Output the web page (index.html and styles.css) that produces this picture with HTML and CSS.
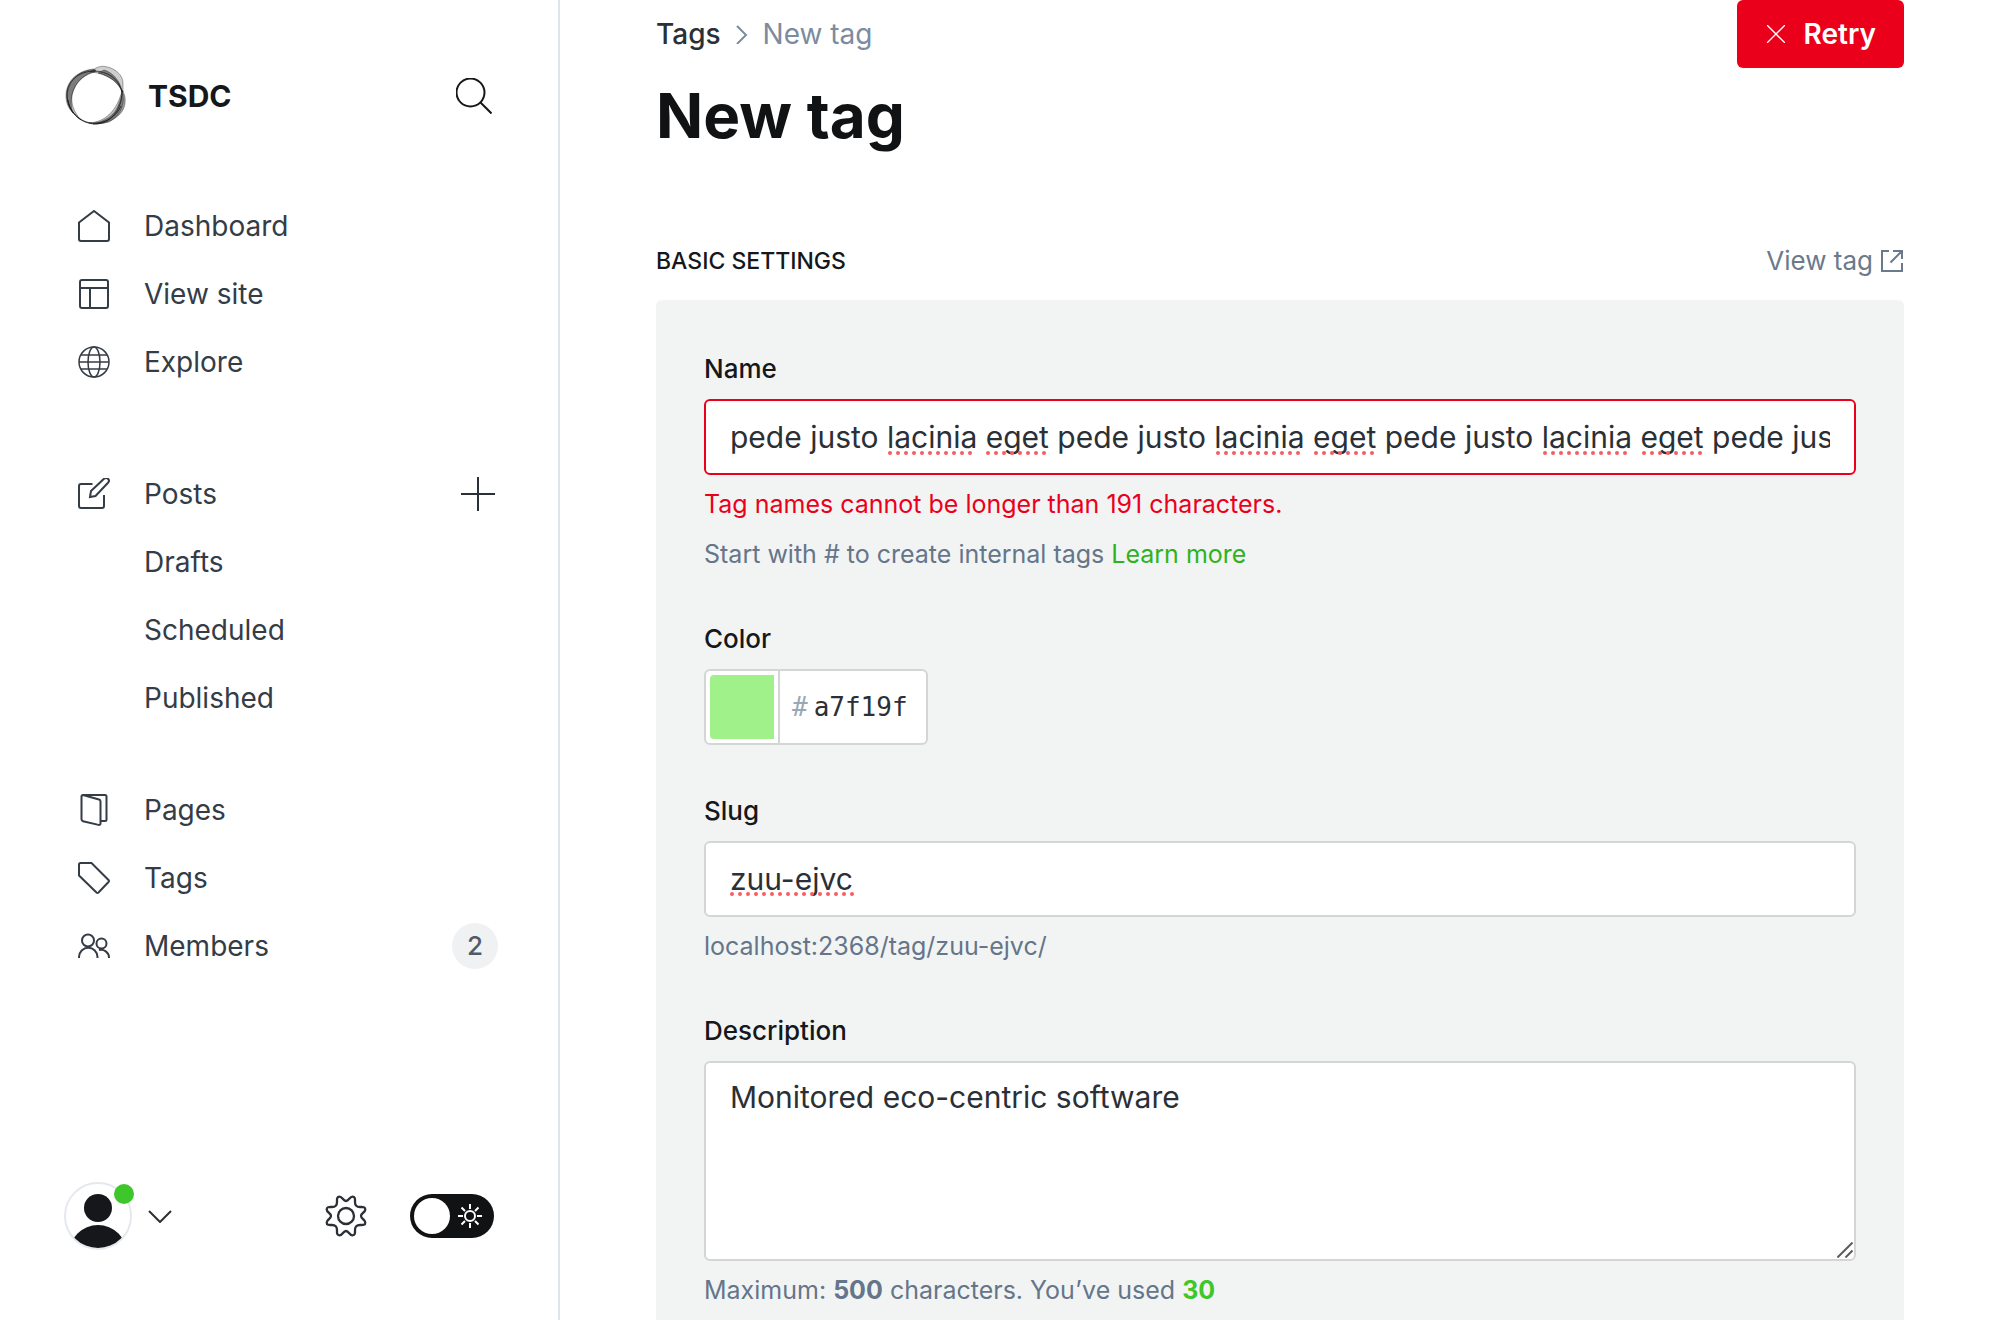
FILE: index.html
```html
<!DOCTYPE html>
<html lang="en">
<head>
<meta charset="utf-8">
<meta name="viewport" content="width=device-width, initial-scale=1">
<title>New tag</title>
<link rel="stylesheet" href="styles.css">
</head>
<body>
<div class="app">
  <aside class="sidebar">
    <header class="site">
      <svg class="site-logo" viewBox="0 0 64 64" aria-hidden="true">
        <g fill="#111" stroke="#111" stroke-opacity=".6" stroke-width=".6">
          <path fill-opacity=".2" d="M26 8C31 4 36 1.500 41 2.500 51 4 59 11 59 19V28C54 18 46 13 38 10 34 9 29 8 26 8Z"/>
          <path fill-opacity=".45" d="M40 6C48 8 57 17 58 28 54 18 47 13 34 9Z"/>
          <path fill-opacity=".4" d="M32 6C14 5 2 17 2 32 2 38 4 44 9 49 6 41 7 31 10 25 14 16 22 10 31 8Z"/>
          <path fill-opacity=".25" d="M30 5C14 6 4 18 3 32 4 42 8 50 17 56 9 47 7 39 8 31 11 18 20 10 31 7Z"/>
          <path fill-opacity=".4" d="M58 26C63 33 62 44 56 50 49 57 40 60 29 60 41 57 50 52 54 42 56 37 58 32 58 26Z"/>
          <path fill-opacity=".25" d="M58 27C62 40 56 52 45 58 38 60 30 60 25 59 42 58 53 46 58 27Z"/>
        </g>
        <g fill="none" stroke="#111" stroke-opacity=".75" stroke-width="1">
          <path d="M3 31C3 47 16 60 32 60 47 59 58 45 58 28 55 15 44 7 29 7 14 8 3 17 3 31Z"/>
          <path d="M4 36C6 49 18 60 31 59 42 59 52 53 57 42"/>
        </g>
      </svg>
      <span class="site-name">TSDC</span>
      <button class="icon-button" type="button" aria-label="Search">
        <svg width="36" height="36" viewBox="0 0 36 36" fill="none" stroke="#15171a" stroke-width="2"><circle cx="14.500" cy="14.500" r="14"/><path d="m24.500 24.500 11 11"/></svg>
      </button>
    </header>

    <nav class="nav">
      <ul class="nav-group">
        <li><a href="#"><svg class="icon" viewBox="0 0 32 32"><path d="M1 12.500 16 1l15 11.500V29a2 2 0 0 1-2 2H3a2 2 0 0 1-2-2Z"/></svg>Dashboard</a></li>
        <li><a href="#"><svg class="icon" viewBox="0 0 32 32"><rect x="2" y="2" width="28" height="28" rx="2"/><path d="M2 10h28M12 10v20"/></svg>View site</a></li>
        <li><a href="#"><svg class="icon icon-thin" viewBox="0 0 32 32"><circle cx="16" cy="16" r="15"/><ellipse cx="16" cy="16" rx="6" ry="15"/><path d="M1 16h30M3 9h26M3 23h26"/></svg>Explore</a></li>
      </ul>
      <ul class="nav-group nav-posts">
        <li>
          <a href="#"><svg class="icon" viewBox="0 0 32 32"><path d="M14.500 6H3a2 2 0 0 0-2 2v20a2 2 0 0 0 2 2h21a2 2 0 0 0 2-2V17M12 19l1-6L26 .800a2.800 2.800 0 0 1 4 4L17.500 18Z"/></svg>Posts</a>
          <button class="icon-button add" type="button" aria-label="New post"><svg width="34" height="34" viewBox="0 0 34 34" fill="none" stroke="#2b3036" stroke-width="2"><path d="M17 0v34M0 17h34"/></svg></button>
        </li>
        <li class="sub"><a href="#">Drafts</a></li>
        <li class="sub"><a href="#">Scheduled</a></li>
        <li class="sub"><a href="#">Published</a></li>
      </ul>
      <ul class="nav-group">
        <li><a href="#"><svg class="icon" viewBox="0 0 32 32"><path d="M5 1h22a1.500 1.500 0 0 1 1.500 1.500v23A1.500 1.500 0 0 1 27 27h-4.500M5 1l16 4.500A2 2 0 0 1 22.500 7.500v22a1.500 1.500 0 0 1-2 1.400L5 27.200a2 2 0 0 1-1.500-2V2.500A1.500 1.500 0 0 1 5 1Z"/></svg>Pages</a></li>
        <li><a href="#"><svg class="icon" viewBox="0 0 32 32"><path d="M2.500 1H13.500L30.500 18a1.500 1.500 0 0 1 0 2L20.500 30.500a1.500 1.500 0 0 1-2 0L1 13.500v-11A1.500 1.500 0 0 1 2.500 1Z"/></svg>Tags</a></li>
        <li><a href="#"><svg class="icon" viewBox="0 0 32 32"><circle cx="10" cy="10.500" r="6"/><circle cx="23.500" cy="13.500" r="5"/><path d="M1 28v-1a9 9 0 0 1 18.500 0v1M21 20a8 8 0 0 1 10 7.500v.5"/></svg>Members</a><span class="count">2</span></li>
      </ul>
    </nav>

    <footer class="account">
      <button class="user" type="button" aria-label="Your account">
        <svg class="avatar" viewBox="0 0 68 68"><defs><clipPath id="face"><circle cx="34" cy="34" r="32"/></clipPath></defs><circle cx="34" cy="34" r="33" fill="#fff" stroke="#e5e9ed" stroke-width="2"/><g fill="#15171a" clip-path="url(#face)"><circle cx="34" cy="26" r="14"/><circle cx="34" cy="72" r="29"/></g></svg>
        <span class="status"></span>
        <svg width="24" height="14" viewBox="0 0 24 14" fill="none" stroke="#2b3036" stroke-width="2"><path d="m1 2 11 11L23 2"/></svg>
      </button>
      <button class="icon-button settings" type="button" aria-label="Settings">
        <svg width="42" height="42" viewBox="-21 -21 42 42" fill="none" stroke="#2b3036" stroke-width="2.300"><circle r="8"/><path id="tooth" d="M0-15C3-15 3.500-19.300 6.500-19.300 9.500-19.300 9-16.500 9-14 9-11.500 9.800-10.600 10.200-10.200 10.600-9.800 11.500-9 14-9 16.500-9 19.300-9.500 19.300-6.500 19.300-3.500 15-3 15 0"/><use href="#tooth" transform="rotate(90)"/><use href="#tooth" transform="rotate(180)"/><use href="#tooth" transform="rotate(270)"/></svg>
      </button>
      <label class="night">
        <input type="checkbox" aria-label="Night mode">
        <svg width="24" height="24" viewBox="-12 -12 24 24" fill="none" stroke="#fff" stroke-width="2"><circle r="5"/><path d="M0-12v5M0 7v5M-12 0h5M7 0h5M-8.500-8.500l3.500 3.500M5 5l3.500 3.500M-8.500 8.500-5 5M5-5l3.500-3.500"/></svg>
      </label>
    </footer>
  </aside>

  <main class="main">
    <header class="page-header">
      <div>
        <div class="breadcrumb">
          <a href="#">Tags</a>
          <svg width="12" height="20" viewBox="0 0 12 20" fill="none" stroke="#7c8b9f" stroke-width="2"><path d="m1 2 9 9-9 9"/></svg>
          <span>New tag</span>
        </div>
        <h1>New tag</h1>
      </div>
      <button class="retry" type="submit" form="tag-form">
        <svg width="18" height="18" viewBox="0 0 18 18" fill="none" stroke="#fff" stroke-width="1.300"><path d="m0 0 18 18M18 0 0 18"/></svg>
        Retry
      </button>
    </header>

    <div class="section-header">
      <h2>BASIC SETTINGS</h2>
      <a href="#">View tag
        <svg width="23" height="22" viewBox="0 0 23 22" fill="none" stroke="#6b7a8b" stroke-width="2"><path d="M8 1H1v20h20v-8M12 1h9v8M21 1 9.500 12.500"/></svg>
      </a>
    </div>

    <form class="panel" id="tag-form">
      <div class="field">
        <label for="name">Name</label>
        <div class="input-wrap">
          <input class="input invalid" id="name" type="text" value="pede justo lacinia eget pede justo lacinia eget pede justo lacinia eget pede justo lacinia eget pede justo lacinia eget">
          <svg class="spelling" aria-hidden="true"><path d="M186 54h86M284 54h60M514 54h86M612 54h60M841 54h86M940 54h60"/></svg>
        </div>
        <p class="error">Tag names cannot be longer than 191 characters.</p>
        <p class="help second">Start with # to create internal tags <a href="#">Learn more</a></p>
      </div>

      <div class="field field-color">
        <label for="hex">Color</label>
        <div class="color">
          <input class="swatch" type="color" value="#a1f18b" aria-label="Pick a color">
          <span class="hex"><span class="hash">#</span><input id="hex" type="text" value="a7f19f" maxlength="6"></span>
        </div>
      </div>

      <div class="field">
        <label for="slug">Slug</label>
        <div class="input-wrap">
          <input class="input" id="slug" type="text" value="zuu-ejvc">
          <svg class="spelling" aria-hidden="true"><path d="M28 53h121"/></svg>
        </div>
        <p class="help">localhost:2368/tag/zuu-ejvc/</p>
      </div>

      <div class="field">
        <label for="description">Description</label>
        <div class="input-wrap">
          <textarea class="input" id="description">Monitored eco-centric software</textarea>
          <svg class="grip" viewBox="0 0 16 16" aria-hidden="true"><path d="M.5 15.500 15.500.5M8.500 15.500l7-7"/></svg>
        </div>
        <p class="help">Maximum: <b>500</b> characters. You’ve used <b class="used">30</b></p>
      </div>
    </form>
  </main>
</div>
</body>
</html>
```
FILE: styles.css
```css
*, *::before, *::after { box-sizing: border-box; }

body {
  margin: 0;
  background: #fff;
  color: #15171a;
  font-family: Inter, "Liberation Sans", sans-serif;
  font-size: 28px;
}

h1, h2, p, ul { margin: 0; padding: 0; }
ul { list-style: none; }
a { color: inherit; text-decoration: none; }
svg { display: block; flex: none; }
button, input, textarea { font: inherit; }
button { border: 0; padding: 0; background: none; color: inherit; cursor: pointer; }

.app { display: flex; min-height: 100vh; }

/* Sidebar */
.sidebar {
  display: flex;
  flex: none;
  flex-direction: column;
  width: 560px;
  border-right: 2px solid #dfe4e8;
}

.site { display: flex; align-items: center; height: 192px; padding: 0 66px 0 64px; }
.site-logo { width: 64px; height: 64px; }
.site-name { flex: 1; margin-left: 20px; font-size: 30px; font-weight: 700; }

.nav { flex: 1; color: #343c46; }
.nav-group { margin-bottom: 64px; }
.nav-posts { margin-bottom: 44px; }
.nav-group li { display: flex; align-items: center; height: 68px; padding: 0 60px 0 78px; }
.nav-group a { display: flex; flex: 1; align-items: center; gap: 34px; line-height: 32px; }
.nav-group .sub { padding-left: 144px; }
.nav-group .add { margin-right: 3px; }
.icon { width: 32px; height: 32px; fill: none; stroke: #343c46; stroke-width: 2; }
.icon-thin { stroke-width: 1.5; }
.count {
  width: 46px;
  height: 46px;
  border-radius: 50%;
  background: #eff1f2;
  color: #4f5b69;
  font-size: 26px;
  font-weight: 500;
  line-height: 46px;
  text-align: center;
}

.account { display: flex; align-items: center; padding: 0 64px 70px; }
.user { position: relative; display: flex; align-items: center; gap: 16px; }
.avatar { width: 68px; height: 68px; }
.status {
  position: absolute;
  top: 2px;
  left: 50px;
  width: 20px;
  height: 20px;
  border-radius: 50%;
  background: #3ec72b;
}
.settings { margin: 0 43px 0 auto; }
.night {
  display: flex;
  align-items: center;
  gap: 8px;
  width: 84px;
  height: 44px;
  padding: 4px;
  border-radius: 22px;
  background: #111214;
}
.night input {
  width: 36px;
  height: 36px;
  margin: 0;
  border-radius: 50%;
  appearance: none;
  background: #fff;
}

/* Main column */
.main { display: flex; flex: 1; flex-direction: column; min-width: 0; padding: 0 96px; }

.page-header { display: flex; align-items: flex-start; justify-content: space-between; }
.breadcrumb { display: flex; align-items: center; gap: 15px; height: 68px; color: #7c8b9f; line-height: 32px; }
.breadcrumb a { color: #2b3036; font-weight: 500; }
h1 { color: #111214; font-size: 62px; font-weight: 700; line-height: 96px; }
.retry {
  display: flex;
  align-items: center;
  gap: 19px;
  height: 68px;
  padding: 0 28px 0 30px;
  border-radius: 6px;
  background: #eb001b;
  color: #fff;
  font-weight: 600;
}

.section-header {
  display: flex;
  align-items: center;
  justify-content: space-between;
  height: 34px;
  margin: 80px 0 22px;
}
h2 { font-size: 23px; font-weight: 500; }
.section-header a { display: flex; align-items: center; gap: 8px; color: #6b7a8b; font-size: 26px; line-height: 32px; }

.panel { flex: 1; padding: 48px 48px 0; border-radius: 6px 6px 0 0; background: #f2f4f3; }
.field { margin-bottom: 47px; }
.field:last-child { margin-bottom: 0; }
.field-color { margin-bottom: 45px; }
.field label { display: block; margin-bottom: 9px; font-size: 26px; font-weight: 500; line-height: 42px; }

.input {
  display: block;
  width: 100%;
  height: 76px;
  padding: 0 24px;
  border: 2px solid #d4d6d6;
  border-radius: 6px;
  outline: 0;
  background: #fff;
  color: #2b3036;
  font-size: 30px;
}
.input.invalid { border-color: #eb001b; }
textarea.input { height: 200px; padding: 12px 24px; line-height: 44px; resize: vertical; }
textarea.input::-webkit-resizer { background: transparent; }

.input-wrap { position: relative; }
.spelling {
  position: absolute;
  top: 0;
  left: 0;
  width: 100%;
  height: 100%;
  pointer-events: none;
  fill: none;
  stroke: #fb5b5e;
  stroke-width: 4;
  stroke-linecap: round;
  stroke-dasharray: 0 8;
}
.grip {
  position: absolute;
  right: 3px;
  bottom: 3px;
  width: 16px;
  height: 16px;
  pointer-events: none;
  stroke: #5c5c5c;
  stroke-width: 2;
}

.help, .error { margin-top: 12px; font-size: 25px; line-height: 34px; }
.help { color: #65758a; }
.help.second { margin-top: 16px; }
.help a { color: #30b21f; }
.help b { font-weight: 700; }
.help .used { color: #3ec72b; }
.error { color: #eb001b; }

.color {
  display: flex;
  width: 224px;
  height: 76px;
  border: 2px solid #d4d6d6;
  border-radius: 6px;
  background: #fff;
}
.swatch {
  width: 74px;
  height: 72px;
  padding: 4px;
  border: 0;
  border-right: 2px solid #d4d6d6;
  background: none;
  appearance: none;
}
.swatch::-webkit-color-swatch-wrapper { padding: 0; }
.swatch::-webkit-color-swatch { border: 0; border-radius: 4px 0 0 4px; }
.hex { display: flex; flex: 1; align-items: center; gap: 6px; min-width: 0; padding-left: 12px; font-family: "DejaVu Sans Mono", monospace; font-size: 26px; }
.hash { color: #9aa7b5; }
.hex input { width: 100px; padding: 0; border: 0; outline: 0; background: none; color: #2b3036; }
```
